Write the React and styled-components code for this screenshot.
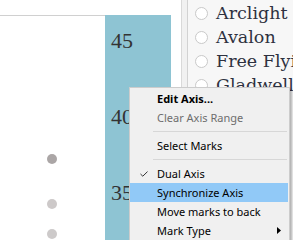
import React from "react";
import styled, { createGlobalStyle } from "styled-components";

const Global = createGlobalStyle`
  html, body { margin: 0; padding: 0; background: #fff; overflow: hidden; }
  #root { width: 293px; height: 240px; }
`;

const Page = styled.div`
  position: relative;
  display: flex;
  width: 293px;
  height: 240px;
  overflow: hidden;
  background: #fff;
`;

const ChartPane = styled.div`
  display: flex;
  flex-direction: column;
  width: 181px;
  flex: none;
`;

const ChartTop = styled.div`
  height: 15px;
  flex: none;
`;

const ChartBody = styled.div`
  flex: 1;
  display: flex;
`;

const Plot = styled.div`
  width: 105px;
  border-top: 1px solid #d0d0d0;
`;

const Axis = styled.div`
  width: 66px;
  background: #8ec4d3;
  padding-top: 15px;
  display: flex;
  flex-direction: column;
  gap: 54px;
`;

const AxisLabel = styled.div`
  font-family: "Liberation Serif", serif;
  font-size: 22px;
  line-height: 22px;
  color: #333;
  padding-left: 6px;
`;

const Gutter = styled.div`
  width: 10px;
`;

const Rule = styled.div`
  width: 1px;
  flex: none;
  background: ${(p) => p.$color};
`;

const Strip = styled.div`
  width: 5px;
  flex: none;
  background: #f1f1f1;
`;

const ListPane = styled.div`
  flex: 1;
  background: #f7f7f7;
  padding-top: 1px;
  overflow: hidden;
`;

const ListItem = styled.div`
  height: 24px;
  display: flex;
  align-items: center;
  gap: 8px;
  padding-left: 7px;
  white-space: nowrap;
`;

const Radio = styled.span`
  width: 13px;
  height: 13px;
  box-sizing: border-box;
  border-radius: 50%;
  border: 1px solid #c9c9c9;
  background: #fff;
  flex: none;
`;

const ItemLabel = styled.span`
  font-family: "DejaVu Serif", serif;
  font-size: 17.5px;
  color: #2e3140;
`;

const Menu = styled.div`
  position: absolute;
  left: 129px;
  top: 87px;
  width: 161px;
  box-sizing: border-box;
  background: #f0f0f0;
  border: 1px solid #cccccc;
  box-shadow: 2px 2px 2px rgba(0, 0, 0, 0.28);
  padding: 1px 1px 2px 0;
  font-family: "Noto Sans", sans-serif;
  font-size: 11px;
`;

const Item = styled.div`
  display: grid;
  grid-template-columns: 27px 1fr 18px;
  align-items: center;
  height: 19px;
  background: ${(p) => (p.$active ? "#91c9f7" : "transparent")};
  color: ${(p) => (p.$disabled ? "#6d6d6d" : "#000")};
  font-weight: ${(p) => (p.$bold ? 700 : 400)};
  white-space: nowrap;
`;

const Separator = styled.div`
  height: 9px;
  display: flex;
  align-items: center;
  margin-left: 23px;
  margin-right: 1px;
  &::after {
    content: "";
    flex: 1;
    height: 1px;
    background: #d7d7d7;
  }
`;

const IconCell = styled.span`
  display: flex;
  align-items: center;
  justify-content: center;
`;

const Check = () => (
  <svg width="8" height="6" viewBox="0 0 8 6">
    <path d="M0.5 3 L2.8 5.2 L7.5 0.6" fill="none" stroke="#333" strokeWidth="1" />
  </svg>
);

const Arrow = () => (
  <svg width="4" height="7" viewBox="0 0 4 7">
    <polygon points="0,0 4,3.5 0,7" fill="#000" />
  </svg>
);

const dots = [
  { y: 143, c: "#aba6a6" },
  { y: 188, c: "#cdc9c9" },
  { y: 218, c: "#cdcaca" },
];

export default function App() {
  return (
    <>
      <Global />
      <Page>
        <ChartPane>
          <ChartTop />
          <ChartBody>
            <Plot>
              <svg width="105" height="225" viewBox="0 0 105 225">
                {dots.map((d, i) => (
                  <circle key={i} cx="52" cy={d.y} r="5" fill={d.c} />
                ))}
              </svg>
            </Plot>
            <Axis>
              <AxisLabel>45</AxisLabel>
              <AxisLabel>40</AxisLabel>
              <AxisLabel>35</AxisLabel>
            </Axis>
            <Gutter />
          </ChartBody>
        </ChartPane>
        <Rule $color="#d9d9d9" />
        <Strip />
        <Rule $color="#d2d2d2" />
        <ListPane>
          {["Arclight", "Avalon", "Free Flying", "Gladwell"].map((n) => (
            <ListItem key={n}>
              <Radio />
              <ItemLabel>{n}</ItemLabel>
            </ListItem>
          ))}
        </ListPane>
        <Menu>
          <Item $bold><span /><span>Edit Axis...</span><span /></Item>
          <Item $disabled><span /><span>Clear Axis Range</span><span /></Item>
          <Separator />
          <Item><span /><span>Select Marks</span><span /></Item>
          <Separator />
          <Item><IconCell><Check /></IconCell><span>Dual Axis</span><span /></Item>
          <Item $active><span /><span>Synchronize Axis</span><span /></Item>
          <Item><span /><span>Move marks to back</span><span /></Item>
          <Item><span /><span>Mark Type</span><IconCell><Arrow /></IconCell></Item>
        </Menu>
      </Page>
    </>
  );
}
